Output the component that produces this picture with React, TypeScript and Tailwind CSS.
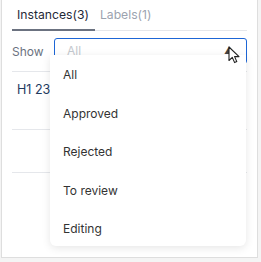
import React from 'react';

const statusOptions = ['All', 'Approved', 'Rejected', 'To review', 'Editing'];

const Pointer = () => (
  <svg width="12" height="18" viewBox="0 0 12 18" className="absolute left-[228px] top-[46px]">
    <path d="M1 1 L1 14.5 L4.3 11.4 L6.6 16.6 L8.8 15.6 L6.6 10.6 L11 10.6 Z" fill="#fff" stroke="#222" strokeWidth="1.1" strokeLinejoin="round" />
  </svg>
);

const App = () => {
  return (
    <div className="relative w-[261px] h-[262px] bg-[#f4f4f4] font-['Inter',sans-serif] overflow-hidden">
      <div className="ml-[1px] w-[257px] h-[258px] bg-white border border-t-0 border-[#dedede] px-[10px]">
        {/* Tabs */}
        <div className="flex items-end h-[31px] border-b border-[#e5e7eb]">
          <div className="pl-[5px] pr-[6px] h-[30px] flex items-center border-b-2 border-[#6b7280] text-[12.2px] text-[#1f2937] -mb-[1px]">
            Instances(3)
          </div>
          <div className="px-[5px] h-[30px] flex items-center text-[12.2px] text-[#9ca3af]">Labels(1)</div>
        </div>

        {/* Filter */}
        <div className="flex items-center h-[41px] border-b border-[#e5e7eb] pt-[1px]">
          <span className="text-[12px] text-[#6b7280] w-[42px]">Show</span>
          <div className="flex-1 h-[26px] border border-[#1d66d6] rounded-[3px] flex items-center px-[12px] mb-[3px] mt-[1px]">
            <span className="text-[12px] text-[#c4c8ce]">All</span>
            <span className="ml-auto text-[10px] text-[#444]">▲</span>
          </div>
        </div>

        {/* Rows */}
        <div className="h-[58px] border-b border-[#e5e7eb] px-[5px] pt-[9px] text-[12.5px] text-[#1e3a5f]">H1 23/</div>
        <div className="h-[43px] border-b border-[#e5e7eb]" />
      </div>

      {/* Dropdown */}
      <div className="absolute left-[50px] top-[55px] w-[196px] h-[191px] bg-white rounded-b-md shadow-[0_2px_8px_rgba(0,0,0,0.1)] pt-[1px]">
        {statusOptions.map((opt) => (
          <div key={opt} className="h-[38.5px] flex items-center px-[13px] text-[12px] text-[#333]">
            {opt}
          </div>
        ))}
      </div>

      <Pointer />
    </div>
  );
};

export default App;
